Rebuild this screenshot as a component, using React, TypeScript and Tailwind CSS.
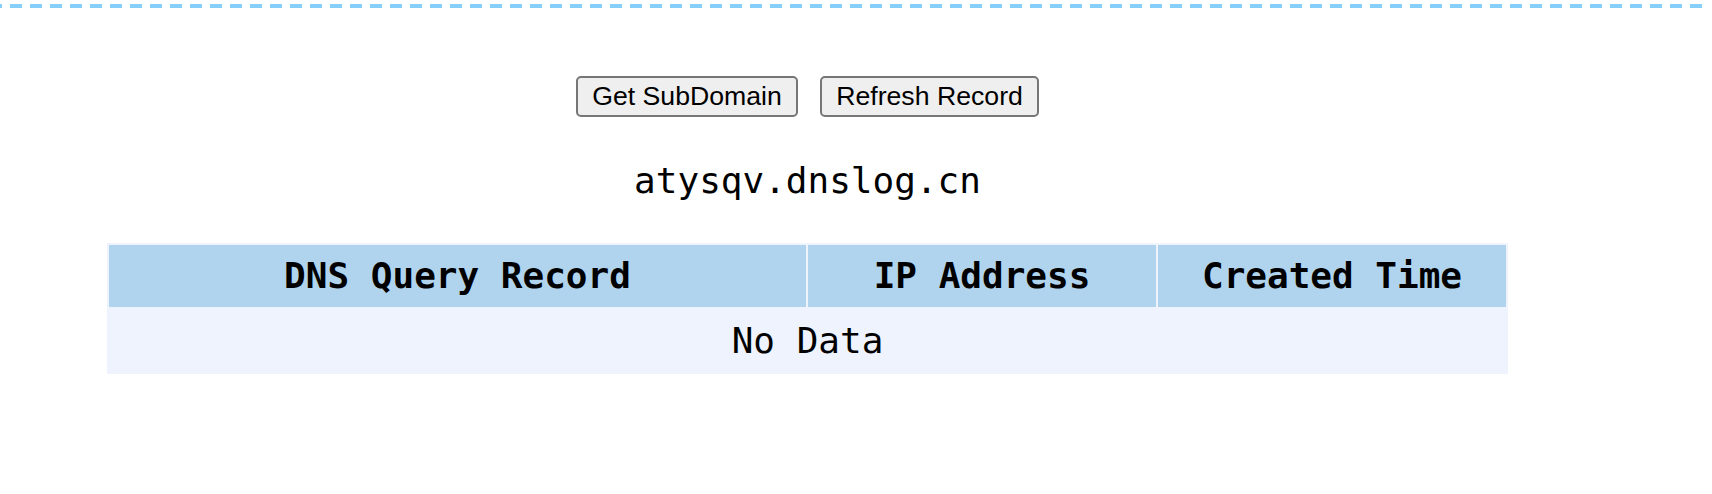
export default function App() {
  const mono = "font-['DejaVu_Sans_Mono',monospace]"
  return (
    <div className="w-[1712px] h-[494px] bg-white pt-[4px]">
      <div className="h-[4px] w-[1707px] bg-[repeating-linear-gradient(90deg,#87cefa_0_2px,transparent_2px_10px,#87cefa_10px_20px)]" />
      <div className="w-[1615px] flex flex-col items-center">
        <div className="mt-[68px] flex gap-[22px] font-['Liberation_Sans',Arial,sans-serif] text-[26.67px] leading-none text-black">
          <button className="w-[222px] h-[41px] rounded-[5px] border-2 border-[#767676] bg-[#efefef]">Get SubDomain</button>
          <button className="w-[219px] h-[41px] rounded-[5px] border-2 border-[#767676] bg-[#efefef]">Refresh Record</button>
        </div>
        <div className={`mt-[43px] h-[42px] leading-[42px] text-[36px] text-black ${mono}`}>atysqv.dnslog.cn</div>
        <table className={`mt-[41px] w-[1401px] border-separate border-spacing-[2px] bg-[#eef3fd] text-[36px] text-black ${mono}`}>
          <thead>
            <tr className="bg-[#b0d4ee]">
              <th className="w-[697px] h-[62px] p-0 font-bold">DNS Query Record</th>
              <th className="w-[348px] h-[62px] p-0 font-bold">IP Address</th>
              <th className="w-[348px] h-[62px] p-0 font-bold">Created Time</th>
            </tr>
          </thead>
          <tbody>
            <tr>
              <td colSpan={3} className="h-[63px] p-0 text-center">No Data</td>
            </tr>
          </tbody>
        </table>
      </div>
    </div>
  )
}
